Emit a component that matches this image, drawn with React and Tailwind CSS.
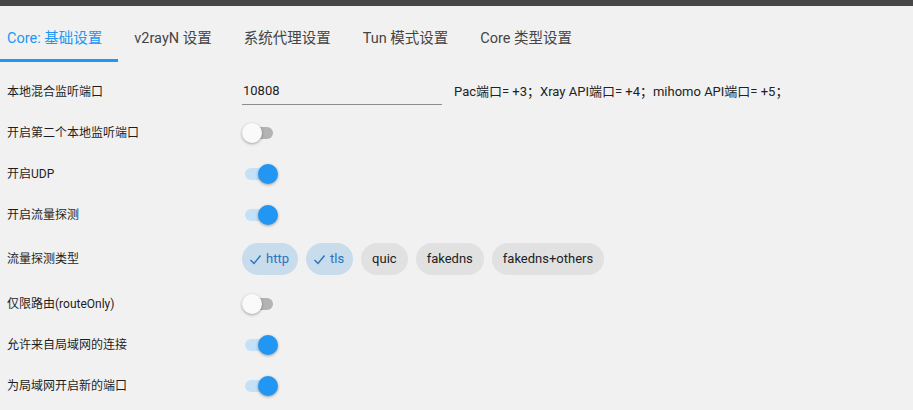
import React, { useState } from "react";

const TABS = ["Core: 基础设置", "v2rayN 设置", "系统代理设置", "Tun 模式设置", "Core 类型设置"];

const SNIFF = [
  { label: "http", on: true },
  { label: "tls", on: true },
  { label: "quic", on: false },
  { label: "fakedns", on: false },
  { label: "fakedns+others", on: false },
];

function Toggle({ on }) {
  return (
    <div className="relative w-[36px] h-[20px]">
      <div className={`absolute left-[3px] top-[4px] w-[28px] h-[12px] rounded-full ${on ? "bg-[#c5e1f7]" : "bg-[#b3b3b3]"}`} />
      <div
        className={`absolute top-0 w-[20px] h-[20px] rounded-full shadow-[0_1px_3px_rgba(0,0,0,0.35)] ${
          on ? "left-[16px] bg-[#2196f3]" : "left-0 bg-[#fafafa]"
        }`}
      />
    </div>
  );
}

function Check() {
  return (
    <svg width="13" height="13" viewBox="0 0 13 13" fill="none">
      <polyline points="1.5,7 5,10.5 11.5,2.5" stroke="#2a73bd" strokeWidth="1.4" />
    </svg>
  );
}

function Row({ label, h = "h-[41px]", children }) {
  return (
    <div className={`flex items-center ${h}`}>
      <div className="w-[242px] pl-[7px] text-[12px] text-[#1e1e1e]">{label}</div>
      <div className="flex items-center">{children}</div>
    </div>
  );
}

export default function App() {
  const [tab, setTab] = useState(0);

  return (
    <div
      className="w-[913px] h-[410px] overflow-hidden bg-[#f1f1f1] text-[#1e1e1e]"
      style={{ fontFamily: 'Roboto, "Noto Sans CJK SC", sans-serif' }}
    >
      <div className="h-[6px] bg-[#474747]" />

      {/* Tabs */}
      <div className="flex h-[56px]">
        {TABS.map((t, i) => (
          <button
            key={t}
            onClick={() => setTab(i)}
            className={`pt-[22px] pb-[9px] leading-[22px] text-[14.5px] border-b-[3px] whitespace-nowrap ${
              i === 0 ? "pl-[7px] pr-[16px]" : "px-[16px]"
            } ${tab === i ? "border-[#2196f3] text-[#2196f3]" : "border-transparent text-[#454545]"}`}
          >
            {t}
          </button>
        ))}
      </div>

      <div className="flex flex-col mt-[9px]">
        <Row label="本地混合监听端口">
          <div className="w-[200px] h-[27px] leading-[26px] border-b border-[#8c8c8c] pl-[1px] text-[13px] text-[#222]">
            10808
          </div>
          <div className="ml-[12px] text-[13px] text-[#222] whitespace-nowrap">
            Pac端口= +3；Xray API端口= +4；mihomo API端口= +5；
          </div>
        </Row>
        <Row label="开启第二个本地监听端口">
          <Toggle on={false} />
        </Row>
        <Row label="开启UDP">
          <Toggle on />
        </Row>
        <Row label="开启流量探测">
          <Toggle on />
        </Row>
        <Row label="流量探测类型" h="h-[48px]">
          <div className="flex gap-[8px]">
            {SNIFF.map((s) =>
              s.on ? (
                <div
                  key={s.label}
                  className="h-[32px] flex items-center gap-[4px] pl-[7px] pr-[9px] rounded-full bg-[#c8dcec] text-[13px] text-[#2a73bd]"
                >
                  <Check />
                  {s.label}
                </div>
              ) : (
                <div
                  key={s.label}
                  className="h-[32px] flex items-center px-[11px] rounded-full bg-[#e1e1e1] text-[13px] text-[#222]"
                >
                  {s.label}
                </div>
              )
            )}
          </div>
        </Row>
        <Row label="仅限路由(routeOnly)">
          <Toggle on={false} />
        </Row>
        <Row label="允许来自局域网的连接">
          <Toggle on />
        </Row>
        <Row label="为局域网开启新的端口">
          <Toggle on />
        </Row>
      </div>
    </div>
  );
}
